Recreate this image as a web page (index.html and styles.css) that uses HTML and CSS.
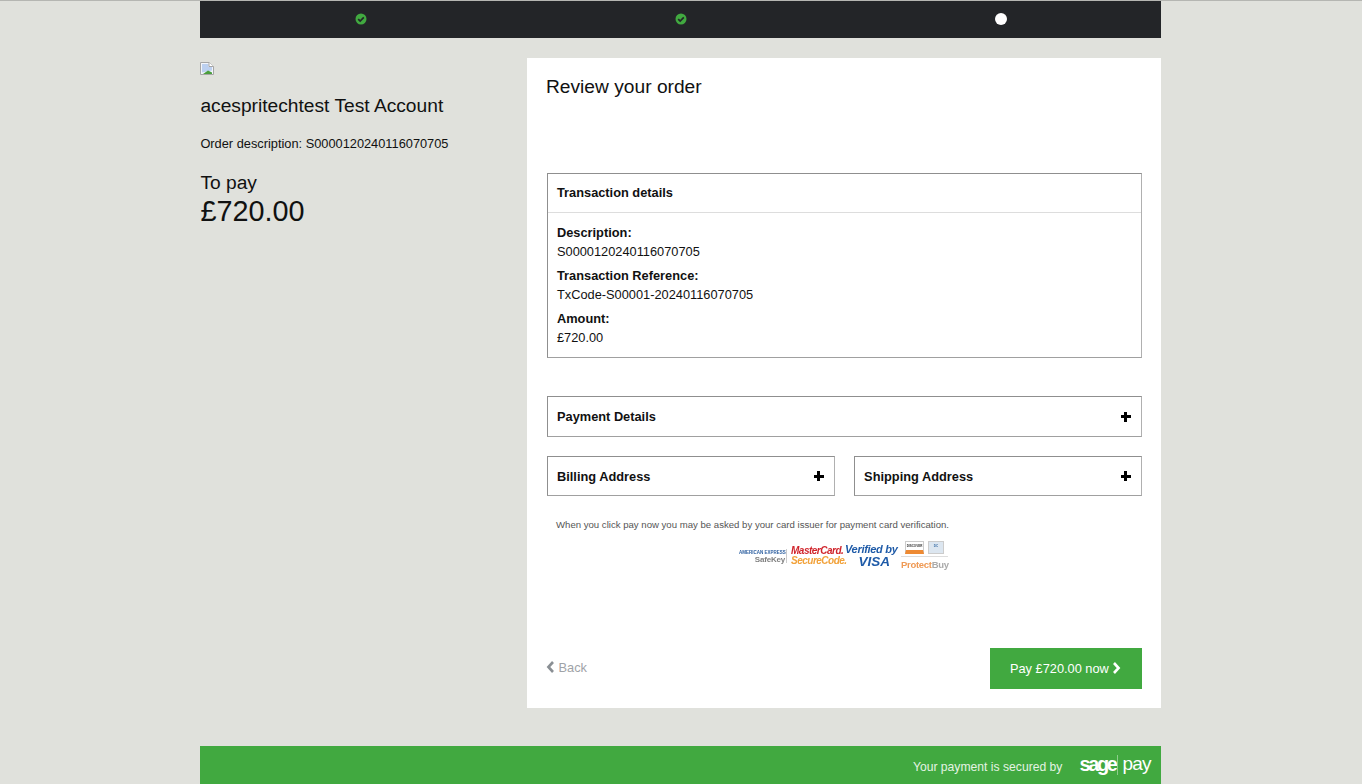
FILE: index.html
```html
<!DOCTYPE html>
<html>
<head>
    <title>Review your order</title>
    <link rel="stylesheet" href="styles.css">
    <meta charset="UTF-8">
</head>
<body>
<div class="page">
    <div class="steps">
        <div class="step">
            <svg class="tick" viewBox="0 0 12 12"><circle cx="6" cy="6" r="5.500" fill="#41a940"/><path d="M3.200 6.100l2 2 3.600-3.700" fill="none" stroke="#232528" stroke-width="1.700"/></svg>
        </div>
        <div class="step">
            <svg class="tick" viewBox="0 0 12 12"><circle cx="6" cy="6" r="5.500" fill="#41a940"/><path d="M3.200 6.100l2 2 3.600-3.700" fill="none" stroke="#232528" stroke-width="1.700"/></svg>
        </div>
        <div class="step"><span class="dot"></span></div>
    </div>

    <div class="main">
        <div class="side">
            <svg class="broken" viewBox="0 0 14 13">
                <path d="M.5 12.500V.5h8.500l4.500 4v8z" fill="#f2f5fb" stroke="#a6a6a6"/>
                <path d="M2 2h6.500v3H12v3.500L2 10.500z" fill="#bcd0f0"/>
                <path d="M3 12l5-3.500 4 2V12z" fill="#4a9e3c"/>
                <path d="M9 .5v4h4.500" fill="#fff" stroke="#a6a6a6"/>
            </svg>
            <h2 class="account">acespritechtest Test Account</h2>
            <p class="order-desc">Order description: S0000120240116070705</p>
            <div class="to-pay">To pay</div>
            <div class="total">£720.00</div>
        </div>

        <div class="panel">
            <h1>Review your order</h1>

            <div class="box details">
                <div class="box-head">Transaction details</div>
                <div class="box-body">
                    <div class="label">Description:</div>
                    <div class="value">S0000120240116070705</div>
                    <div class="label">Transaction Reference:</div>
                    <div class="value">TxCode-S00001-20240116070705</div>
                    <div class="label">Amount:</div>
                    <div class="value">£720.00</div>
                </div>
            </div>

            <div class="box toggle payment">Payment Details <span class="plus"></span></div>

            <div class="address-row">
                <div class="box toggle">Billing Address <span class="plus"></span></div>
                <div class="box toggle">Shipping Address <span class="plus"></span></div>
            </div>

            <p class="note">When you click pay now you may be asked by your card issuer for payment card verification.</p>

            <div class="schemes">
                <div class="amex">
                    <span class="amex-top">AMERICAN EXPRESS</span>
                    <span class="amex-key">SafeKey</span>
                </div>
                <div class="mc">
                    <span class="mc-top">MasterCard.</span>
                    <span class="mc-bottom">SecureCode.</span>
                </div>
                <div class="visa">
                    <span class="visa-top">Verified by</span>
                    <span class="visa-bottom">VISA</span>
                </div>
                <div class="protect">
                    <div class="protect-cards">
                        <span class="mini discover">DISCOVER</span>
                        <span class="mini diners">DC</span>
                    </div>
                    <span class="protect-text">Protect<b>Buy</b></span>
                </div>
            </div>

            <div class="actions">
                <a class="back">
                    <svg class="chev" viewBox="0 0 8 12"><path d="M6.500 1L1.900 6l4.600 5" fill="none" stroke="#8a8f94" stroke-width="2.600"/></svg>
                    Back
                </a>
                <a class="pay">Pay £720.00 now
                    <svg class="chev" viewBox="0 0 8 12"><path d="M1.500 1l4.600 5-4.600 5" fill="none" stroke="#fff" stroke-width="2.600"/></svg>
                </a>
            </div>
        </div>
    </div>

    <div class="footer">
        <span class="secured">Your payment is secured by</span>
        <span class="sage">sage</span>
        <span class="sage-bar"></span>
        <span class="sage-pay">pay</span>
    </div>
</div>
</body>
</html>
```

FILE: styles.css
```css
html, body {
    height: 100%;
}

body {
    font-family: "Liberation Sans", Arial, sans-serif;
    margin: 0;
    padding: 0;
    background-color: #e0e1dc;
    color: #111;
    border-top: 1px solid #b5b6b2;
    box-sizing: border-box;
    overflow: hidden;
}

.page {
    width: 960.800px;
    margin-left: 200.400px;
}

.steps {
    display: flex;
    height: 37px;
    background-color: #232528;
}

.step {
    flex: 1;
    display: flex;
    align-items: center;
    justify-content: center;
    padding-bottom: 1px;
}

.tick {
    width: 12px;
    height: 12px;
}

.dot {
    width: 12px;
    height: 12px;
    border-radius: 50%;
    background-color: #fff;
}

.main {
    display: flex;
    align-items: flex-start;
    margin-top: 20px;
}

.side {
    width: 326.600px;
    flex: none;
}

.broken {
    display: block;
    width: 14px;
    height: 13px;
    margin-top: 4px;
}

.account {
    font-size: 19.200px;
    font-weight: normal;
    line-height: 22px;
    margin: 20px 0 0;
}

.order-desc {
    font-size: 12.800px;
    line-height: 16px;
    margin: 19px 0 0;
}

.to-pay {
    font-size: 19.200px;
    line-height: 22px;
    margin-top: 20px;
}

.total {
    font-size: 28.800px;
    line-height: 34px;
}

.panel {
    flex: 1;
    height: 650px;
    box-sizing: border-box;
    padding: 18px 19.500px 0 20px;
    background-color: #fff;
}

h1 {
    font-size: 19.200px;
    font-weight: normal;
    line-height: 22px;
    margin: 0 0 0 -1px;
}

.box {
    border: 1px solid #8f8f8f;
    border-right-color: #b0b0b0;
    border-bottom-color: #a0a0a0;
    font-size: 12.800px;
    box-sizing: border-box;
}

.details {
    margin-top: 75px;
    height: 185px;
}

.box-head {
    height: 39px;
    line-height: 38px;
    padding-left: 9px;
    font-weight: bold;
    border-bottom: 1px solid #ddd;
    box-sizing: border-box;
}

.box-body {
    padding: 10px 9px 0;
}

.label {
    font-weight: bold;
    line-height: 19px;
}

.value {
    line-height: 19px;
    margin-bottom: 5px;
}

.toggle {
    display: flex;
    align-items: center;
    justify-content: space-between;
    padding: 0 10px 0 9px;
    font-weight: bold;
}

.payment {
    height: 41px;
    margin-top: 38px;
}

.address-row {
    display: flex;
    justify-content: space-between;
    margin-top: 19px;
}

.address-row .box {
    width: 287.600px;
    height: 40px;
}

.plus {
    width: 10px;
    height: 10px;
    background:
        linear-gradient(#000, #000) center / 10px 3px no-repeat,
        linear-gradient(#000, #000) center / 3px 10px no-repeat;
}

.note {
    font-size: 9.600px;
    line-height: 12px;
    color: #555;
    margin: 23px 0 0 9px;
}

.schemes {
    display: flex;
    align-items: center;
    height: 31px;
    margin: 9px 0 0 192px;
    white-space: nowrap;
    filter: blur(0.4px);
}

.amex {
    width: 48px;
    text-align: right;
    line-height: 7px;
    border-right: 1px solid #ccc;
    padding-right: 1px;
    box-sizing: border-box;
}

.amex span {
    display: block;
}

.amex-top {
    font-size: 4.500px;
    font-weight: bold;
    color: #2a5d9f;
}

.amex-key {
    font-size: 8px;
    font-weight: bold;
    color: #808080;
    letter-spacing: -0.200px;
}

.mc {
    width: 54px;
    margin-left: 4px;
    line-height: 10px;
}

.mc span {
    display: block;
    font-size: 10px;
    font-weight: bold;
    font-style: italic;
    letter-spacing: -0.500px;
}

.mc-top {
    color: #d0242b;
}

.mc-bottom {
    color: #f2a23a;
}

.visa {
    width: 53px;
}

.visa span {
    display: block;
    font-style: italic;
    font-weight: bold;
    color: #1f5ba8;
}

.visa-top {
    font-size: 11px;
    line-height: 11px;
    letter-spacing: -0.300px;
}

.visa-bottom {
    font-size: 13.500px;
    line-height: 13px;
    text-align: right;
    padding-right: 8px;
    color: #1c4f96;
}

.protect {
    width: 47px;
    margin-left: 3px;
    text-align: center;
}

.protect-cards {
    display: flex;
    justify-content: center;
    gap: 4px;
    padding-bottom: 2px;
    border-bottom: 1px solid #ddd;
}

.mini {
    display: block;
    width: 19px;
    height: 13px;
    line-height: 8px;
    font-size: 3px;
    font-weight: bold;
    border: 1px solid #ccc;
    box-sizing: border-box;
    color: #333;
    overflow: hidden;
}

.discover {
    border-bottom: 4px solid #ee8a33;
}

.diners {
    width: 16px;
    background-color: #dce6f0;
    color: #3b6ea5;
}

.protect-text {
    display: block;
    font-size: 9.500px;
    line-height: 13px;
    margin-top: 1px;
    font-weight: bold;
    color: #ef9a55;
    letter-spacing: -0.300px;
}

.protect-text b {
    color: #aaa;
}

.actions {
    display: flex;
    align-items: center;
    justify-content: space-between;
    margin-top: 77px;
}

.back {
    font-size: 12.800px;
    color: #9fa3a7;
    margin: -2px 0 0 -1px;
}

.chev {
    width: 9px;
    height: 12px;
    vertical-align: -1px;
}

.pay {
    width: 152px;
    height: 41px;
    line-height: 41px;
    text-align: center;
    font-size: 12.800px;
    color: #fff;
    background-color: #41a940;
}

.footer {
    display: flex;
    align-items: center;
    justify-content: flex-end;
    height: 38px;
    margin-top: 38px;
    padding-right: 10.500px;
    background-color: #41a940;
    color: #fff;
}

.secured {
    font-size: 12.160px;
    color: #e4f3e3;
    margin: 3px 17px 0 0;
}

.sage {
    font-size: 20px;
    font-weight: bold;
    letter-spacing: -2.400px;
    line-height: 20px;
    margin-top: -3px;
}

.sage-bar {
    width: 1px;
    height: 20px;
    margin: 0 4px 0 2px;
    background-color: #8dcd8c;
}

.sage-pay {
    font-size: 19px;
    line-height: 20px;
    letter-spacing: -0.800px;
    margin-top: -3px;
}
```
